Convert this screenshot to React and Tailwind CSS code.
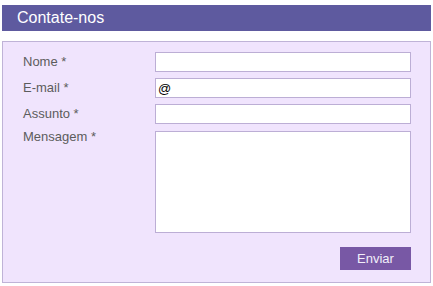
import React from 'react';

const fields = [
  { label: 'Nome *', value: '' },
  { label: 'E-mail *', value: '@' },
  { label: 'Assunto *', value: '' },
];

export default function App() {
  return (
    <div className="w-[433px] h-[286px] bg-white pt-[5px] pl-[2px] font-['Liberation_Sans',Arial,sans-serif]">
      <div className="w-[429px] h-[26px] bg-[#5e5a9f] text-white text-[16px] pl-[15px] flex items-center">
        Contate-nos
      </div>

      <div className="mt-[10px] w-[429px] h-[242px] border border-[#bfb3d7] bg-[#f0e4fd] pt-[10px] pl-[20px]">
        <div className="flex flex-col gap-[6px]">
          {fields.map(f => (
            <div key={f.label} className="flex items-center">
              <label className="w-[132px] text-[13px] text-[#5c5c5c]">{f.label}</label>
              <input
                readOnly
                value={f.value}
                className="w-[256px] h-[20px] bg-white border border-[#bcaed5] px-[2px] text-[13px] text-black outline-none"
              />
            </div>
          ))}
          <div className="flex items-start mt-[1px]">
            <label className="w-[132px] text-[13px] text-[#5c5c5c] -mt-[4px]">Mensagem *</label>
            <textarea
              readOnly
              className="w-[256px] h-[102px] bg-white border border-[#bcaed5] resize-none outline-none"
            />
          </div>
        </div>

        <div className="flex justify-end pr-[19px] mt-[14px]">
          <button className="w-[71px] h-[23px] bg-[#7858a5] text-[#f2eefa] text-[13px]">Enviar</button>
        </div>
      </div>
    </div>
  );
}
